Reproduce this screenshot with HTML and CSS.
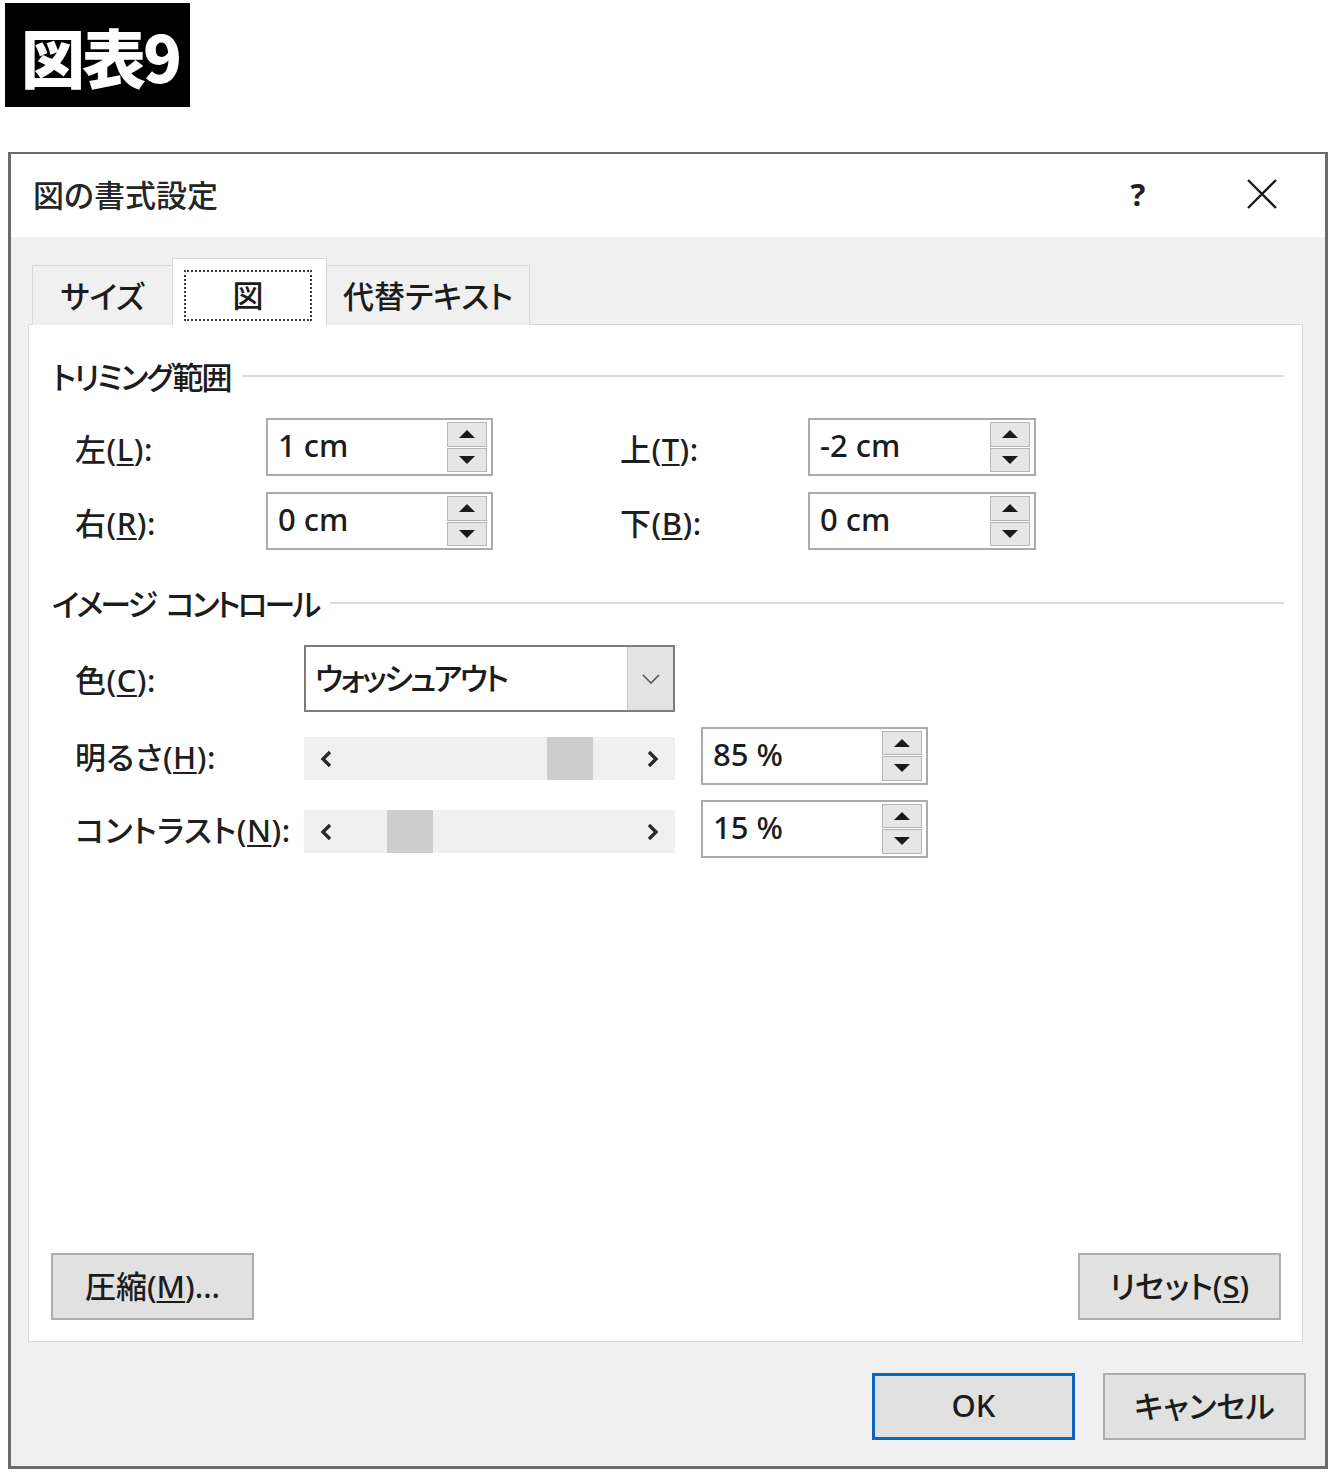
FILE: index.html
```html
<!DOCTYPE html>
<html lang="ja">
<head>
<meta charset="utf-8">
<title>図の書式設定</title>
<link rel="stylesheet" href="styles.css">
</head>
<body>
<div class="badge">図表9</div>

<div class="dialog">
  <div class="titlebar">
    <span class="title">図の書式設定</span>
    <span class="help">?</span>
    <span class="close">
      <svg width="32" height="32" viewBox="0 0 32 32"><path d="M2 2 L30 30 M30 2 L2 30" stroke="#1a1a1a" stroke-width="2.4" fill="none"/></svg>
    </span>
  </div>

  <div class="body">
    <div class="tabs">
      <div class="tab tab-size">サイズ</div>
      <div class="tab tab-active"><span class="focus">図</span></div>
      <div class="tab tab-alt">代替テキスト</div>
    </div>

    <div class="panel">
      <div class="group-head"><span class="h-trim">トリミング範囲</span><i class="rule"></i></div>
      <div class="crop-grid">
        <span class="lbl">左(<u>L</u>):</span>
        <div class="spin"><span class="val">1 cm</span><div class="spin-btns"><span class="sb"><i class="tri-up"></i></span><span class="sb"><i class="tri-dn"></i></span></div></div>
        <span></span>
        <span class="lbl">上(<u>T</u>):</span>
        <div class="spin"><span class="val">-2 cm</span><div class="spin-btns"><span class="sb"><i class="tri-up"></i></span><span class="sb"><i class="tri-dn"></i></span></div></div>

        <span class="lbl">右(<u>R</u>):</span>
        <div class="spin"><span class="val">0 cm</span><div class="spin-btns"><span class="sb"><i class="tri-up"></i></span><span class="sb"><i class="tri-dn"></i></span></div></div>
        <span></span>
        <span class="lbl">下(<u>B</u>):</span>
        <div class="spin"><span class="val">0 cm</span><div class="spin-btns"><span class="sb"><i class="tri-up"></i></span><span class="sb"><i class="tri-dn"></i></span></div></div>
      </div>

      <div class="group-head head2"><span class="h-img">イメージ<span class="gap"> </span>コントロール</span><i class="rule"></i></div>
      <div class="img-grid">
        <span class="lbl">色(<u>C</u>):</span>
        <div class="combo">
          <span class="val combo-val">ウォッシュアウト</span>
          <span class="combo-btn"><svg width="18" height="10" viewBox="0 0 18 10"><path d="M1 1 L9 9 L17 1" stroke="#555" stroke-width="1.6" fill="none"/></svg></span>
        </div>
        <span></span>
        <span></span>

        <span class="lbl">明るさ(<u>H</u>):</span>
        <div class="scroll">
          <span class="arrow"><svg width="14" height="20" viewBox="0 0 14 20"><path d="M11 3 L4 10 L11 17" stroke="#2a2a2a" stroke-width="3.4" fill="none"/></svg></span>
          <span class="track"><i class="thumb" style="margin-left:199px"></i></span>
          <span class="arrow"><svg width="14" height="20" viewBox="0 0 14 20"><path d="M3 3 L10 10 L3 17" stroke="#2a2a2a" stroke-width="3.4" fill="none"/></svg></span>
        </div>
        <span></span>
        <div class="spin"><span class="val">85 %</span><div class="spin-btns"><span class="sb"><i class="tri-up"></i></span><span class="sb"><i class="tri-dn"></i></span></div></div>

        <span class="lbl">コントラスト(<u>N</u>):</span>
        <div class="scroll">
          <span class="arrow"><svg width="14" height="20" viewBox="0 0 14 20"><path d="M11 3 L4 10 L11 17" stroke="#2a2a2a" stroke-width="3.4" fill="none"/></svg></span>
          <span class="track"><i class="thumb" style="margin-left:39px"></i></span>
          <span class="arrow"><svg width="14" height="20" viewBox="0 0 14 20"><path d="M3 3 L10 10 L3 17" stroke="#2a2a2a" stroke-width="3.4" fill="none"/></svg></span>
        </div>
        <span></span>
        <div class="spin"><span class="val">15 %</span><div class="spin-btns"><span class="sb"><i class="tri-up"></i></span><span class="sb"><i class="tri-dn"></i></span></div></div>
      </div>

      <div class="panel-foot">
        <button class="btn">圧縮(<u>M</u>)...</button>
        <button class="btn">リセット(<u>S</u>)</button>
      </div>
    </div>

    <div class="foot">
      <button class="btn btn-ok">OK</button>
      <button class="btn">キャンセル</button>
    </div>
  </div>
</div>
</body>
</html>
```

FILE: styles.css
```css
* { box-sizing: border-box; }

html, body {
  margin: 0;
  padding: 0;
  background: #ffffff;
}

body {
  font-family: "Noto Sans", "Noto Sans CJK JP", sans-serif;
  font-feature-settings: "palt";
  font-weight: 500;
  color: #1c1c1c;
  width: 1340px;
  height: 1480px;
  overflow: hidden;
}

.badge {
  margin: 3px 0 0 5px;
  width: 185px;
  height: 104px;
  background: #000;
  color: #fff;
  font-family: "Noto Sans CJK JP", sans-serif;
  font-weight: 900;
  font-size: 64px;
  line-height: 104px;
  padding-left: 16px;
  letter-spacing: -3px;
}

.dialog {
  margin: 45px 0 0 8px;
  width: 1320px;
  height: 1317px;
  border: 3px solid #6c6c6c;
  border-top-width: 2px;
  display: flex;
  flex-direction: column;
  background: #f0f0f0;
}

.titlebar {
  height: 83px;
  background: #fff;
  display: flex;
  align-items: center;
  padding: 0 33px 4px 22px;
  font-family: "Noto Sans CJK JP", sans-serif;
  font-size: 31px;
}

.title {
  flex: 1;
  color: #262626;
}

.help {
  width: 40px;
  text-align: center;
  font-family: "Noto Sans", sans-serif;
  font-size: 31px;
  font-weight: 700;
  color: #222;
  margin-right: 74px;
}

.close {
  width: 60px;
  display: flex;
  justify-content: center;
  align-items: center;
}

.body {
  flex: 1;
  display: flex;
  flex-direction: column;
  padding: 22px 22px 0 17px;
}

.tabs {
  display: flex;
  align-items: flex-end;
  height: 66px;
  padding-left: 4px;
  position: relative;
  z-index: 1;
  margin-bottom: -1px;
  font-size: 31px;
}

.tab {
  height: 60px;
  border: 1px solid #d9d9d9;
  border-bottom: none;
  background: #f0f0f0;
  display: flex;
  align-items: center;
  justify-content: center;
  padding-bottom: 2px;
}

.tab-size { width: 140px; border-right: none; }
.tab-alt { width: 203px; border-left: none; }

.tab-active {
  height: 67px;
  width: 155px;
  background: #fff;
  padding: 11px 14px 4px 11px;
  align-items: stretch;
}

.focus {
  flex: 1;
  border: 2px dotted #3a3a3a;
  display: flex;
  align-items: center;
  justify-content: center;
  padding-bottom: 4px;
}

.panel {
  height: 1018px;
  background: #fff;
  border: 1px solid #d9d9d9;
  display: flex;
  flex-direction: column;
  padding: 30px 18px 21px 22px;
  font-size: 31px;
}

.group-head {
  display: flex;
  align-items: center;
  height: 40px;
  padding-left: 1px;
  white-space: nowrap;
}

.h-trim { letter-spacing: -2px; }
.h-img { letter-spacing: -3px; }
.h-img .gap { display: inline-block; width: 11px; }

.group-head .rule {
  flex: 1;
  height: 2px;
  background: #dcdcdc;
  margin-left: 12px;
  margin-top: 2px;
}

.head2 { margin-top: 32px; }

.crop-grid {
  display: grid;
  grid-template-columns: 191px 227px 127px 188px 228px;
  grid-auto-rows: 58px;
  row-gap: 16px;
  align-items: center;
  margin-top: 23px;
  padding-left: 24px;
}

.img-grid {
  display: grid;
  grid-template-columns: 229px 371px 26px 227px;
  grid-template-rows: 67px 59px 59px;
  row-gap: 14px;
  align-items: center;
  margin-top: 23px;
  padding-left: 24px;
}

.lbl {
  white-space: nowrap;
  color: #1f1f1f;
  letter-spacing: 0.5px;
}

u { text-underline-offset: 3px; text-decoration-thickness: 2px; }

.spin {
  height: 58px;
  border: 2px solid #ababab;
  background: #fff;
  display: flex;
  align-items: center;
  padding: 0 4px 0 10px;
}

.val {
  flex: 1;
  white-space: nowrap;
  margin-top: -4px;
}

.spin-btns {
  width: 40px;
  height: 50px;
  display: flex;
  flex-direction: column;
  gap: 1px;
}

.sb {
  flex: 1;
  background: #e6e6e6;
  border: 1px solid #b5b5b5;
  display: flex;
  align-items: center;
  justify-content: center;
}

.tri-up, .tri-dn {
  width: 0;
  height: 0;
  border-left: 8px solid transparent;
  border-right: 8px solid transparent;
}
.tri-up { border-bottom: 8px solid #1a1a1a; }
.tri-dn { border-top: 8px solid #1a1a1a; }

.combo {
  height: 67px;
  border: 2px solid #7d7d7d;
  display: flex;
  align-items: stretch;
  background: #fff;
}

.combo .val {
  align-self: center;
  padding-left: 9px;
}

.combo-val { letter-spacing: -2.5px; }

.combo-btn {
  width: 46px;
  background: #e3e3e3;
  border-left: 1px solid #c8c8c8;
  display: flex;
  align-items: center;
  justify-content: center;
}

.scroll {
  height: 43px;
  background: #f0f0f0;
  display: flex;
  align-items: stretch;
  margin-top: 6px;
}

.arrow {
  width: 44px;
  display: flex;
  align-items: center;
  justify-content: center;
}

.track {
  flex: 1;
  display: flex;
}

.thumb {
  width: 46px;
  background: #cdcdcd;
}

.panel-foot {
  margin-top: auto;
  display: flex;
  justify-content: space-between;
  padding-right: 3px;
}

.btn {
  width: 203px;
  height: 67px;
  background: #e1e1e1;
  border: 2px solid #adadad;
  font-family: "Noto Sans", "Noto Sans CJK JP", sans-serif;
  font-feature-settings: "palt";
  font-weight: 500;
  font-size: 31px;
  color: #1c1c1c;
  padding: 0 0 4px 0;
  margin: 0;
}

.foot {
  display: flex;
  justify-content: flex-end;
  gap: 28px;
  margin-top: 31px;
  margin-right: -3px;
}

.btn-ok {
  border: 3px solid #0d64c2;
}
```
